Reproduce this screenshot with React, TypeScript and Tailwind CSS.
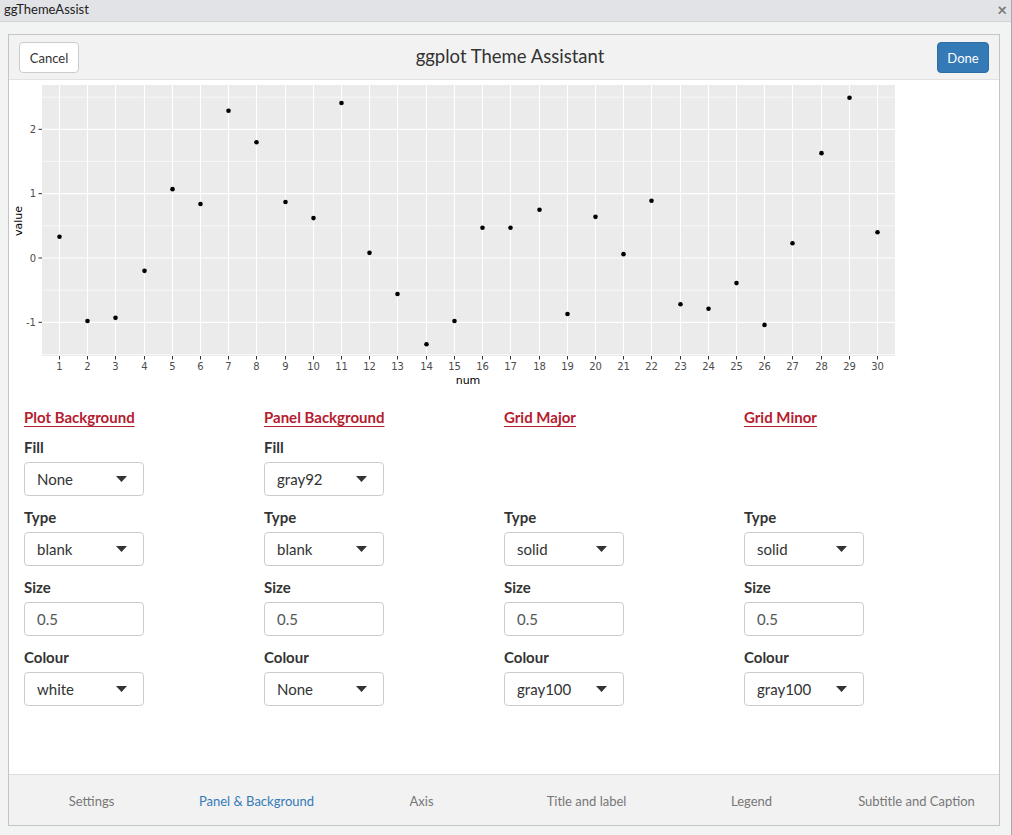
import React from "react";

const values = [
  0.33, -0.98, -0.93, -0.2, 1.07, 0.84, 2.29, 1.8, 0.87, 0.62, 2.41, 0.08, -0.56, -1.34, -0.98,
  0.47, 0.47, 0.75, -0.87, 0.64, 0.06, 0.89, -0.72, -0.79, -0.39, -1.04, 0.23, 1.63, 2.49, 0.4,
];

const xPix = (i: number) => Math.round(59 + (i - 1) * ((877 - 59) / 29)) + 0.5;
const yPix = (v: number) => 258 - v * 64.33;

function Plot() {
  const left = 42;
  const right = 895;
  const top = 85;
  const bottom = 356;
  return (
    <svg width={990} height={312} viewBox="9 80 990 312" className="block">
      <rect x={left} y={top} width={right - left} height={bottom - top} fill="#ebebeb" />
      {[2.5, 1.5, 0.5, -0.5, -1.5].map((v) => (
        <line key={"mn" + v} x1={left} x2={right} y1={yPix(v)} y2={yPix(v)} stroke="#ffffff" strokeWidth={0.6} />
      ))}
      {[2, 1, 0, -1].map((v) => (
        <line key={"mj" + v} x1={left} x2={right} y1={yPix(v)} y2={yPix(v)} stroke="#ffffff" strokeWidth={1.1} />
      ))}
      {values.map((_, i) => (
        <line key={"vx" + i} x1={xPix(i + 1)} x2={xPix(i + 1)} y1={top} y2={bottom} stroke="#ffffff" strokeWidth={1.1} />
      ))}
      {values.map((v, i) => (
        <circle key={"pt" + i} cx={xPix(i + 1)} cy={yPix(v)} r={2.3} fill="#000000" />
      ))}
      {[2, 1, 0, -1].map((v) => (
        <g key={"yt" + v}>
          <line x1={38.5} x2={42} y1={yPix(v)} y2={yPix(v)} stroke="#333333" strokeWidth={1} />
          <text
            x={36}
            y={yPix(v) + 3.5}
            textAnchor="end"
            fontSize={10}
            fill="#4d4d4d"
            fontFamily="'DejaVu Sans', sans-serif"
          >
            {v}
          </text>
        </g>
      ))}
      {values.map((_, i) => (
        <g key={"xt" + i}>
          <line x1={xPix(i + 1)} x2={xPix(i + 1)} y1={356} y2={359.5} stroke="#333333" strokeWidth={1} />
          <text
            x={xPix(i + 1)}
            y={369.5}
            textAnchor="middle"
            fontSize={10}
            fill="#4d4d4d"
            fontFamily="'DejaVu Sans', sans-serif"
          >
            {i + 1}
          </text>
        </g>
      ))}
      <text x={468} y={384} textAnchor="middle" fontSize={11} fill="#000" fontFamily="'DejaVu Sans', sans-serif">
        num
      </text>
      <text
        x={0}
        y={0}
        transform="translate(22 221) rotate(-90)"
        textAnchor="middle"
        fontSize={11}
        fill="#000"
        fontFamily="'DejaVu Sans', sans-serif"
      >
        value
      </text>
    </svg>
  );
}

function Caret() {
  return (
    <svg width="11" height="6" viewBox="0 0 11 6" className="block">
      <path d="M0 0 L11 0 L5.5 6 Z" fill="#333333" />
    </svg>
  );
}

function Select({ value }: { value: string }) {
  return (
    <div className="w-[120px] h-[34px] border border-[#cccccc] rounded-[4px] bg-white flex items-center justify-between pl-[12px] pr-[16px] text-[15px] text-[#333333]">
      <span>{value}</span>
      <Caret />
    </div>
  );
}

function Input({ value }: { value: string }) {
  return (
    <div className="w-[120px] h-[34px] border border-[#cccccc] rounded-[4px] bg-white flex items-center pl-[12px] text-[15px] text-[#555555]">
      {value}
    </div>
  );
}

function Group({ label, children, hidden }: { label: string; children: React.ReactNode; hidden?: boolean }) {
  return (
    <div className={"flex flex-col mb-[11px] " + (hidden ? "invisible" : "")}>
      <div className="h-[20px] leading-[20px] text-[15px] font-bold text-[#333333]">{label}</div>
      <div className="mt-[5px]">{children}</div>
    </div>
  );
}

type Col = {
  title: string;
  fill?: string;
  type: string;
  size: string;
  colour: string;
};

const cols: Col[] = [
  { title: "Plot Background", fill: "None", type: "blank", size: "0.5", colour: "white" },
  { title: "Panel Background", fill: "gray92", type: "blank", size: "0.5", colour: "None" },
  { title: "Grid Major", type: "solid", size: "0.5", colour: "gray100" },
  { title: "Grid Minor", type: "solid", size: "0.5", colour: "gray100" },
];

const tabs = ["Settings", "Panel & Background", "Axis", "Title and label", "Legend", "Subtitle and Caption"];

export default function App() {
  return (
    <div
      className="w-[1012px] h-[835px] bg-[#f2f3f3] flex flex-col border-r border-[#a8a8a8] overflow-hidden"
      style={{ fontFamily: "Lato, 'Open Sans', sans-serif" }}
    >
      <div className="h-[22px] shrink-0 bg-[#e2e3e6] border-b border-[#d4d5d8] flex items-center justify-between pl-[4px] pr-[4px]">
        <span className="text-[13px] leading-[16px] text-[#222222] pb-[3px]">ggThemeAssist</span>
        <span className="text-[17px] leading-[18px] font-bold text-[#7a7a7a] pb-[2px]">×</span>
      </div>
      <div className="flex-1 pl-[8px] pr-[11px] pt-[12px] pb-[9px] flex">
        <div className="flex-1 border border-[#c4c4c4] bg-white flex flex-col">
          <div className="h-[45px] shrink-0 bg-[#f2f2f2] border-b border-[#e2e2e2] flex items-center justify-between px-[10px]">
            <div className="w-[60px] h-[31px] bg-white border border-[#cccccc] rounded-[4px] flex items-center justify-center text-[13px] text-[#333333] pt-[3px]">
              Cancel
            </div>
            <div className="text-[18.5px] text-[#333333] pl-[4px]">ggplot Theme Assistant</div>
            <div className="w-[52px] h-[31px] bg-[#337ab7] border border-[#2e6da4] rounded-[4px] flex items-center justify-center text-[13px] text-white pt-[3px]">
              Done
            </div>
          </div>
          <div className="flex-1 flex flex-col">
            <Plot />
            <div className="grid grid-cols-[240px_240px_240px_240px] pl-[15px] mt-[15px]">
              {cols.map((c) => (
                <div key={c.title} className="flex flex-col">
                  <div className="h-[20px] leading-[20px] text-[15px] font-bold text-[#b5202e] underline underline-offset-[3px] mb-[10px]">
                    {c.title}
                  </div>
                  <Group label="Fill" hidden={!c.fill}>
                    <Select value={c.fill ?? "None"} />
                  </Group>
                  <Group label="Type">
                    <Select value={c.type} />
                  </Group>
                  <Group label="Size">
                    <Input value={c.size} />
                  </Group>
                  <Group label="Colour">
                    <Select value={c.colour} />
                  </Group>
                </div>
              ))}
            </div>
          </div>
          <div className="h-[51px] shrink-0 bg-[#f2f2f2] border-t border-[#dddddd] grid grid-cols-6 pt-[3px]">
            {tabs.map((t) => (
              <div
                key={t}
                className={
                  "flex items-center justify-center text-[13px] " +
                  (t === "Panel & Background" ? "text-[#337ab7]" : "text-[#777777]")
                }
              >
                {t}
              </div>
            ))}
          </div>
        </div>
      </div>
    </div>
  );
}
